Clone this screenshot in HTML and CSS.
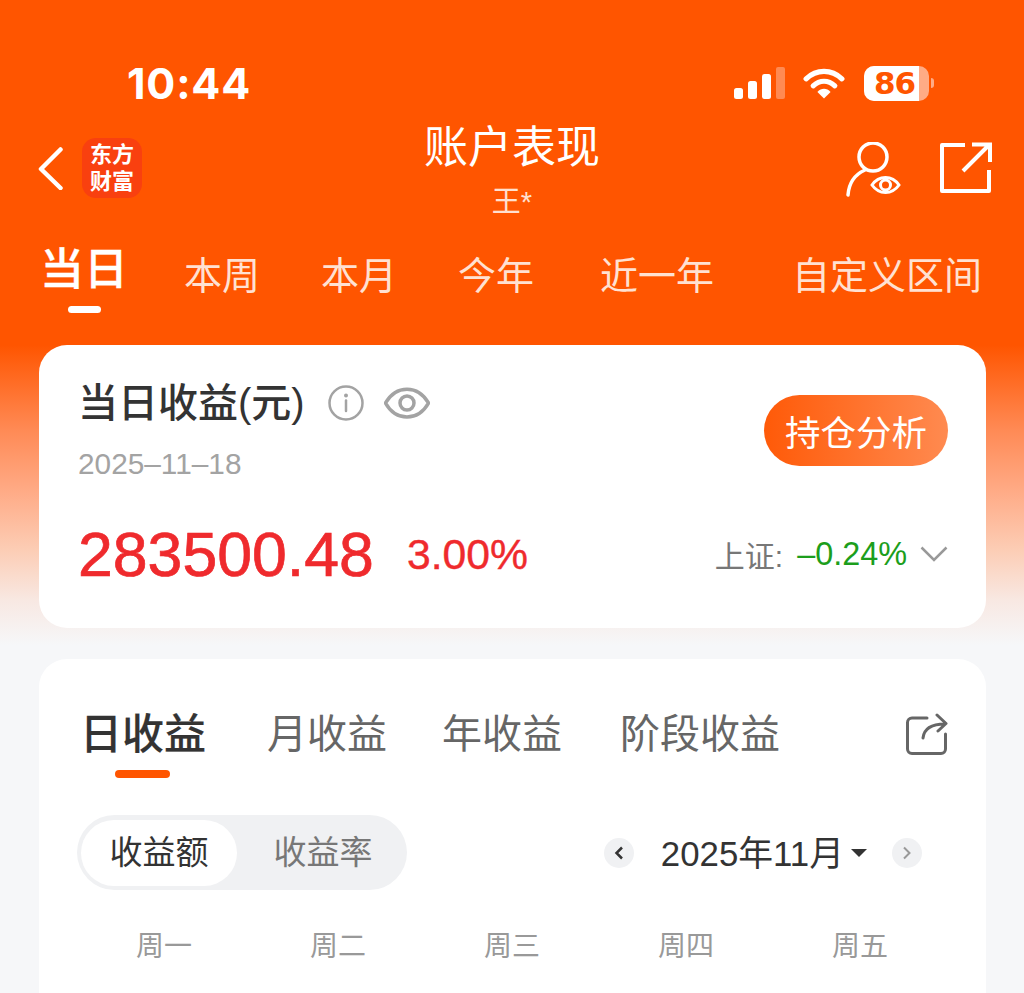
FILE: index.html
```html
<!DOCTYPE html>
<html lang="zh-CN">
<head>
  <meta charset="UTF-8">
  <meta name="viewport" content="width=device-width, initial-scale=1.0">
  <title>账户表现</title>
  <link rel="stylesheet" href="styles.css">
</head>
<body>
  <div class="page">
    <!-- Status bar -->
    <div class="status-bar">
      <span class="time">10:44</span>
      <div class="status-icons">
        <svg class="signal" width="38" height="32" viewBox="0 0 38 32">
          <rect x="0" y="21" width="9" height="11" rx="2.5" fill="#fff"/>
          <rect x="14" y="14" width="9" height="18" rx="2.5" fill="#fff"/>
          <rect x="28" y="7" width="9" height="25" rx="2.5" fill="#fff"/>
        </svg>
        <span class="signal-off"></span>
        <svg class="wifi" width="42" height="32" viewBox="0 0 44 34">
          <path d="M3 12.5C14 2 30 2 41 12.5" fill="none" stroke="#fff" stroke-width="5.5" stroke-linecap="round"/>
          <path d="M10.5 20C17.5 13.5 26.500 13.500 33.500 20" fill="none" stroke="#fff" stroke-width="5.500" stroke-linecap="round"/>
          <path d="M15 26.500C19 22 25 22 29 26.500L22 33.500Z" fill="#fff"/>
        </svg>
        <div class="battery">
          <span class="battery-level">86</span>
          <span class="battery-rest"></span>
        </div>
        <span class="battery-tip"></span>
      </div>
    </div>

    <!-- Nav -->
    <header class="nav">
      <div class="nav-left">
        <svg class="back" width="26" height="44" viewBox="0 0 26 44">
          <path d="M22.500 3.500L3 23L22.500 42" fill="none" stroke="#fff" stroke-width="4.500" stroke-linecap="round" stroke-linejoin="round"/>
        </svg>
        <div class="logo">东方<br>财富</div>
      </div>
      <div class="nav-title">
        <h1>账户表现</h1>
        <p>王*</p>
      </div>
      <div class="nav-right">
        <svg width="56" height="56" viewBox="0 0 56 56">
          <circle cx="27" cy="15" r="14" fill="none" stroke="#fff" stroke-width="3.500"/>
          <path d="M19 28C10 32 3 40 2 53" fill="none" stroke="#fff" stroke-width="3.500" stroke-linecap="round"/>
          <path d="M26 43C33 33 46 33 53 43C46 53 33 53 26 43Z" fill="none" stroke="#fff" stroke-width="3"/>
          <circle cx="39.500" cy="43" r="5" fill="none" stroke="#fff" stroke-width="3"/>
        </svg>
        <svg width="52" height="52" viewBox="0 0 52 52">
          <path d="M25 3H2V49H49V28" fill="none" stroke="#fff" stroke-width="4" stroke-linejoin="round"/>
          <path d="M23 29L49 3M32 2.500H50V20" fill="none" stroke="#fff" stroke-width="4"/>
        </svg>
      </div>
    </header>

    <!-- Period tabs -->
    <nav class="period-tabs">
      <a class="period active">当日</a>
      <a class="period p-week">本周</a>
      <a class="period p-month">本月</a>
      <a class="period p-year">今年</a>
      <a class="period p-12m">近一年</a>
      <a class="period p-custom">自定义区间</a>
    </nav>

    <!-- Daily summary -->
    <section class="card summary">
      <div class="summary-top">
        <div>
          <div class="summary-title">
            <h2>当日收益(元)</h2>
            <svg width="36" height="36" viewBox="0 0 36 36">
              <circle cx="18" cy="18" r="16.500" fill="none" stroke="#a3a3a3" stroke-width="2.500"/>
              <circle cx="18" cy="10.500" r="2" fill="#a3a3a3"/>
              <path d="M18 15.500V26" stroke="#a3a3a3" stroke-width="2.500" stroke-linecap="round"/>
            </svg>
            <svg class="eye" width="46" height="34" viewBox="0 0 46 34">
              <path d="M1.500 17C12 -1.500 34 -1.500 44.500 17C34 35.500 12 35.500 1.500 17Z" fill="none" stroke="#a3a3a3" stroke-width="3.500"/>
              <circle cx="23" cy="17" r="7" fill="none" stroke="#a3a3a3" stroke-width="3.500"/>
            </svg>
          </div>
          <div class="summary-date">2025–11–18</div>
        </div>
        <button class="analysis-btn">持仓分析</button>
      </div>
      <div class="summary-bottom">
        <span class="profit">283500.48</span>
        <span class="profit-rate">3.00%</span>
        <span class="index-name">上证:</span>
        <span class="index-value">–0.24%</span>
        <svg width="28" height="16" viewBox="0 0 28 16">
          <path d="M1.500 1.500L14 14L26.500 1.500" fill="none" stroke="#999" stroke-width="2.500"/>
        </svg>
      </div>
    </section>

    <!-- Profit calendar -->
    <section class="card calendar">
      <div class="cal-tabs">
        <a class="cal-tab active">日收益</a>
        <a class="cal-tab t-month">月收益</a>
        <a class="cal-tab t-year">年收益</a>
        <a class="cal-tab t-stage">阶段收益</a>
        <svg class="cal-share" width="42" height="42" viewBox="0 0 42 42">
          <path d="M21 5H6C3.500 5 1.500 7 1.500 9.500V36C1.500 38.500 3.500 40.500 6 40.500H35C37.500 40.500 39.500 38.500 39.500 36V21" fill="none" stroke="#666" stroke-width="3" stroke-linecap="round"/>
          <path d="M17 25C18 16 24 11 39 11M31 2L40 10.500L32 18" fill="none" stroke="#666" stroke-width="3" stroke-linecap="round" stroke-linejoin="round"/>
        </svg>
      </div>
      <div class="cal-controls">
        <div class="segment">
          <span class="seg-item active">收益额</span>
          <span class="seg-item second">收益率</span>
        </div>
        <div class="month-picker">
          <span class="circle-btn">
            <svg width="10" height="14" viewBox="0 0 10 14"><path d="M8 1.500L2.500 7L8 12.500" fill="none" stroke="#333" stroke-width="2.500"/></svg>
          </span>
          <span class="month-label">2025年11月</span>
          <span class="caret"></span>
          <span class="circle-btn">
            <svg width="10" height="14" viewBox="0 0 10 14"><path d="M2 1.500L7.500 7L2 12.500" fill="none" stroke="#999" stroke-width="2"/></svg>
          </span>
        </div>
      </div>
      <div class="weekdays">
        <span>周一</span>
        <span>周二</span>
        <span>周三</span>
        <span>周四</span>
        <span>周五</span>
      </div>
    </section>
  </div>
</body>
</html>
```

FILE: styles.css
```css
html, body {
  margin: 0;
  padding: 0;
}
body {
  font-family: "Liberation Sans", "Noto Sans CJK SC", sans-serif;
  color: #333;
  background-color: #f6f7f9;
}
h1, h2, p {
  margin: 0;
  font-weight: 400;
}
.page {
  width: 1024px;
  height: 993px;
  overflow: hidden;
  background: linear-gradient(#ff5500 0, #ff5500 345px, #ff8a55 430px, #ffaa85 490px, #fccdb5 550px, #f8e8e2 600px, #f6f7f9 645px);
}

/* Status bar */
.status-bar {
  display: flex;
  align-items: center;
  justify-content: space-between;
  height: 46px;
  padding: 60px 90px 0 127px;
  color: white;
}
.time {
  font-family: Inter, sans-serif;
  font-size: 43px;
  font-weight: 700;
  line-height: 46px;
  letter-spacing: 0.8px;
}
.status-icons {
  display: flex;
  align-items: center;
}
.signal {
  display: block;
}
.signal-off {
  width: 9px;
  height: 32px;
  margin-left: 4px;
  border-radius: 2px;
  background-color: #ff8a52;
}
.wifi {
  margin-left: 18px;
}
.battery {
  display: flex;
  width: 65px;
  height: 35px;
  margin-left: 19px;
  border-radius: 10px;
  overflow: hidden;
  background-color: #ffab85;
}
.battery-level {
  box-sizing: border-box;
  width: 55px;
  padding-left: 6px;
  background-color: white;
  color: #ff5500;
  font-size: 31px;
  font-weight: 700;
  line-height: 35px;
  text-align: center;
  font-family: "DejaVu Sans", sans-serif;
  letter-spacing: -1px;
}
.battery-tip {
  width: 3px;
  height: 10px;
  margin-left: 2px;
  border-radius: 0 5px 5px 0;
  background-color: #ffab85;
}

/* Nav */
.nav {
  display: flex;
  align-items: flex-start;
  justify-content: space-between;
  height: 126px;
  padding: 14px 32px 0 38px;
}
.nav-left {
  display: flex;
  align-items: center;
  gap: 18px;
  margin-top: 18px;
}
.back {
  display: block;
}
.logo {
  width: 60px;
  height: 60px;
  border-radius: 14px;
  background-color: #f9400f;
  color: white;
  font-size: 22px;
  font-weight: 700;
  line-height: 27px;
  text-align: center;
  padding-top: 3px;
  box-sizing: border-box;
}
.nav-title {
  flex: 1;
  color: white;
  text-align: center;
  margin-left: 36px;
}
.nav-title h1 {
  font-size: 44px;
  line-height: 56px;
}
.nav-title p {
  margin-top: 8px;
  font-size: 29px;
  line-height: 36px;
  color: #ffe0d0;
}
.nav-right {
  display: flex;
  align-items: flex-start;
  gap: 38px;
  margin-top: 22px;
}

/* Period tabs */
.period-tabs {
  display: flex;
  align-items: center;
  height: 60px;
  padding: 0 0 0 40px;
  color: #ffe1d2;
}
.period {
  position: relative;
  font-size: 38px;
  line-height: 60px;
  white-space: nowrap;
}
.period.active {
  padding-bottom: 12px;
  font-size: 44px;
  font-weight: 500;
  color: white;
  -webkit-text-stroke: 0.3px white;
}
.period.active::after {
  content: "";
  position: absolute;
  left: 28px;
  bottom: -1px;
  width: 33px;
  height: 7px;
  border-radius: 4px;
  background-color: white;
}
.p-week { margin-left: 56px; }
.p-month { margin-left: 61px; }
.p-year { margin-left: 61px; }
.p-12m { margin-left: 66px; }
.p-custom { margin-left: 78px; }

/* Cards */
.card {
  margin: 0 38px 0 39px;
  background-color: white;
  border-radius: 28px;
}
.summary {
  height: 283px;
  margin-top: 39px;
  padding: 30px 38px 0 39px;
  box-sizing: border-box;
}
.summary-top {
  display: flex;
  justify-content: space-between;
}
.summary-title {
  display: flex;
  align-items: center;
}
.summary-title h2 {
  font-size: 40px;
  font-weight: 500;
  line-height: 56px;
  color: #333;
  margin-right: 23px;
}
.eye {
  margin-left: 20px;
}
.summary-date {
  margin-top: 14px;
  font-size: 29.8px;
  line-height: 38px;
  color: #a3a3a3;
}
.analysis-btn {
  width: 184px;
  height: 71px;
  margin-top: 20px;
  border: none;
  border-radius: 36px;
  background: linear-gradient(90deg, #ff5a08, #ff8a50);
  color: white;
  font-family: inherit;
  font-size: 35.5px;
  padding: 0;
}
.summary-bottom {
  display: flex;
  align-items: center;
  margin-top: 33px;
  height: 76px;
}
.profit {
  font-size: 62.6px;
  color: #ef2a2d;
  -webkit-text-stroke: 0.7px #ef2a2d;
}
.profit-rate {
  margin-left: 33px;
  font-size: 42.7px;
  color: #ef2a2d;
  -webkit-text-stroke: 0.4px #ef2a2d;
}
.index-name {
  margin-left: auto;
  font-size: 30px;
  color: #777;
}
.index-value {
  margin-left: 14px;
  font-size: 32.4px;
  color: #1c9e1c;
}
.summary-bottom svg {
  margin-left: 13px;
}

.calendar {
  margin-top: 31px;
  height: 400px;
  padding: 0 38px;
  border-radius: 28px 28px 0 0;
}

/* Calendar tabs */
.cal-tabs {
  display: flex;
  align-items: center;
  height: 119px;
  padding-top: 32px;
  padding-left: 3px;
  box-sizing: border-box;
}
.cal-tab {
  position: relative;
  font-size: 40px;
  line-height: 87px;
  color: #666;
  white-space: nowrap;
}
.cal-tab.active {
  font-size: 42px;
  font-weight: 500;
  color: #333;
  -webkit-text-stroke: 0.2px #333;
}
.cal-tab.active::after {
  content: "";
  position: absolute;
  left: 35px;
  bottom: 0;
  width: 55px;
  height: 8px;
  border-radius: 4px;
  background-color: #ff5500;
}
.t-month { margin-left: 61px; }
.t-year { margin-left: 55px; }
.t-stage { margin-left: 58px; }
.cal-share {
  margin-left: auto;
  margin-top: -2px;
}

/* Calendar controls */
.cal-controls {
  display: flex;
  align-items: center;
  justify-content: space-between;
  margin-top: 37px;
}
.segment {
  display: flex;
  align-items: center;
  width: 330px;
  height: 75px;
  padding: 0 4px;
  box-sizing: border-box;
  border-radius: 38px;
  background-color: #f0f1f3;
  font-size: 33px;
}
.seg-item {
  width: 156px;
  height: 66px;
  line-height: 66px;
  text-align: center;
  color: #777;
}
.seg-item.active {
  border-radius: 33px;
  background-color: white;
  color: #333;
}
.seg-item.second {
  margin-left: 8px;
}
.month-picker {
  display: flex;
  align-items: center;
  margin-right: 26px;
}
.circle-btn {
  display: flex;
  align-items: center;
  justify-content: center;
  width: 30px;
  height: 30px;
  border-radius: 50%;
  background-color: #f0f1f3;
}
.month-label {
  margin-left: 27px;
  padding-bottom: 3px;
  font-size: 34.8px;
  color: #333;
}
.caret {
  width: 0;
  height: 0;
  margin: 0 25px 0 7px;
  border-left: 8px solid transparent;
  border-right: 8px solid transparent;
  border-top: 8px solid #333;
}

/* Weekday header */
.weekdays {
  display: grid;
  grid-template-columns: repeat(5, 174px);
  margin-top: 37px;
  font-size: 28px;
  line-height: 40px;
  color: #999;
  text-align: center;
}
```
